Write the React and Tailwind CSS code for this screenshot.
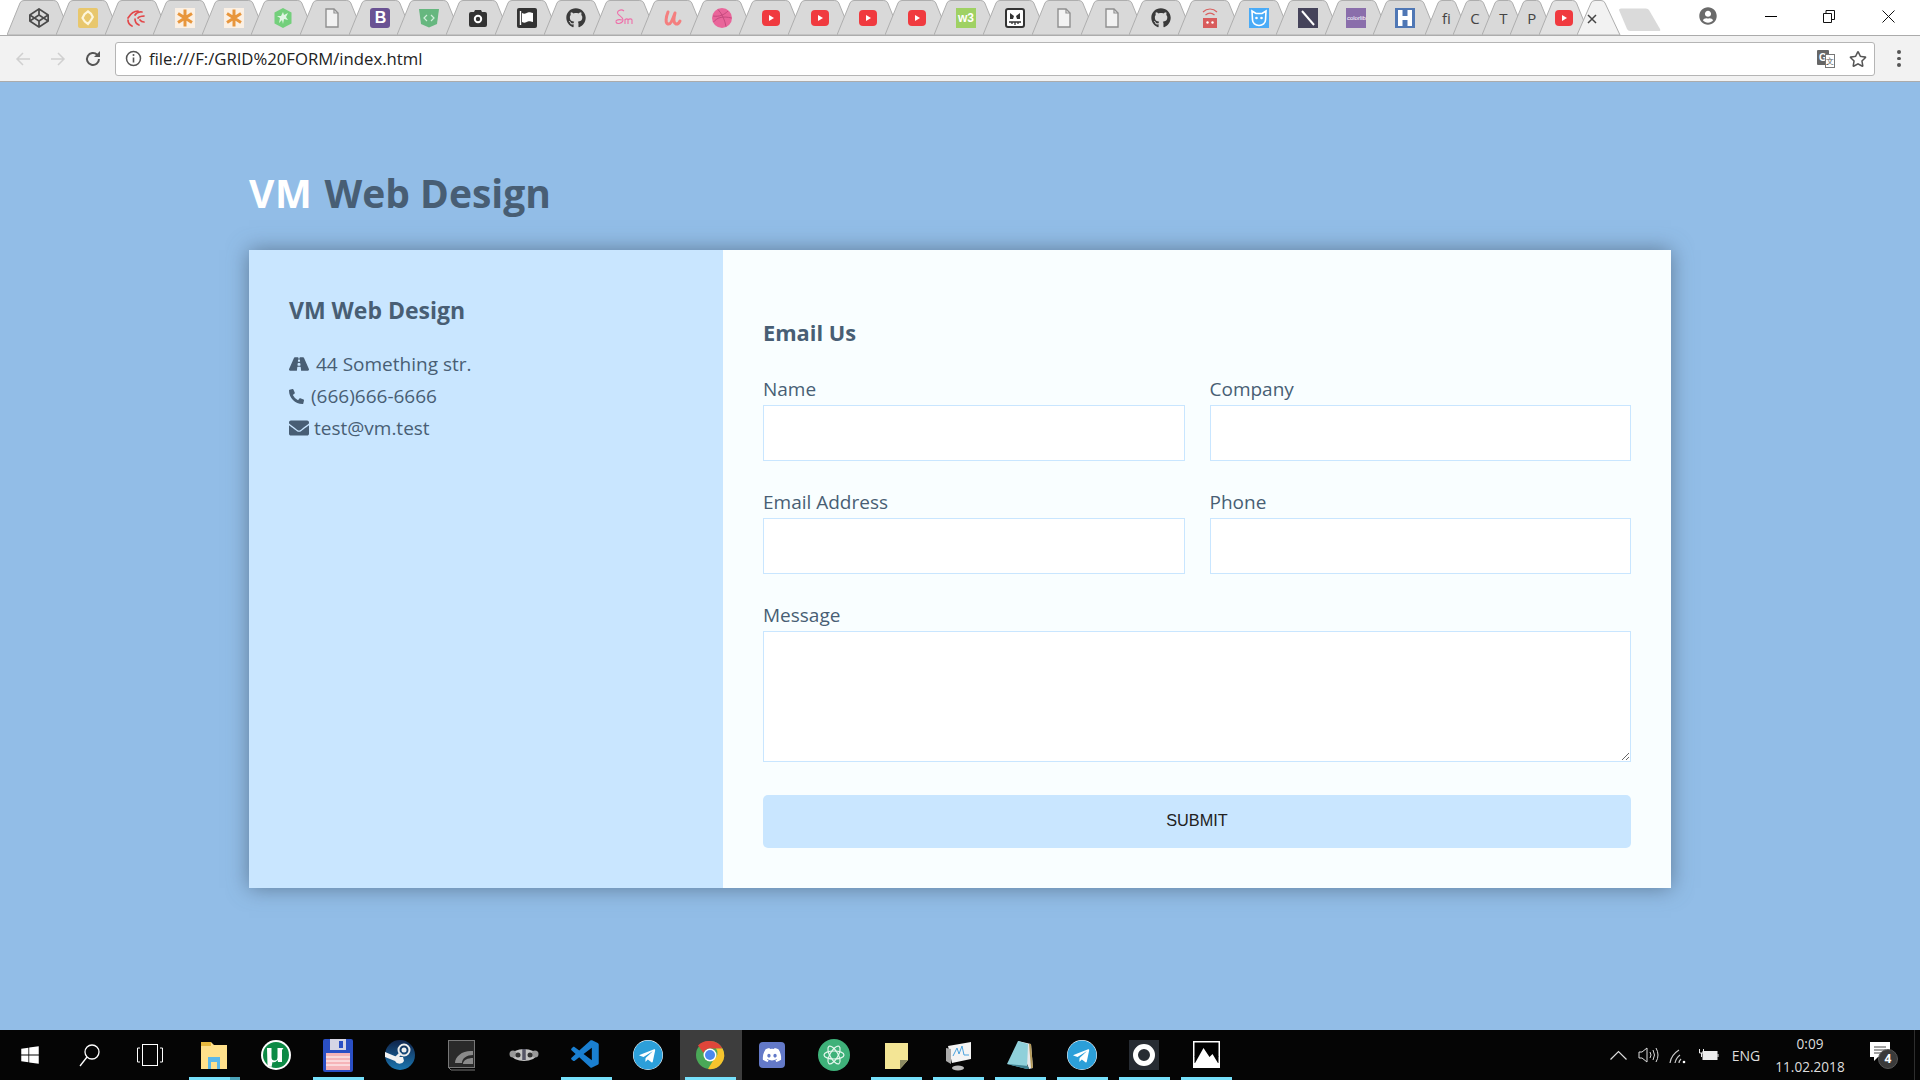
import React from "react";
import { FaCodepen, FaGithub, FaRoad, FaPhoneAlt, FaEnvelope, FaDiscord, FaTelegram, FaUserCircle, FaWindows, FaRegStar } from "react-icons/fa";
import { VscVscode } from "react-icons/vsc";

const S = ({ children, size = 20 }) => (
  <svg width={size} height={size} viewBox="0 0 20 20">{children}</svg>
);
const Asterisk = () => (
  <S><rect width="20" height="20" fill="#fbf0e4" /><g stroke="#e8963c" strokeWidth="3" strokeLinecap="butt"><path d="M10 1.500v17M3 5.500l14 9M17 5.500l-14 9" /></g></S>
);
const Yellow = () => (
  <S><rect width="20" height="20" rx="2" fill="#e8c76d" /><path d="M10 3.500l3 2.200 1.800 3.300-2 3.500-2.800 3.500-3.200-2.500L4.500 10l2-3.800z" fill="none" stroke="#fdf6dc" strokeWidth="2.200" /></S>
);
const Swirl = () => (
  <S><g fill="none" stroke="#e2484a" strokeWidth="1.700" strokeLinecap="round"><path d="M12 3C8 3 5 5 2 10M16 4c-3-.5-6 1-7 3M18 8c-3 .5-5 0-6 2M2 12c0 3 2 5 4 6M9 11c0 3 1.500 5 4 6M14 12c1 1.500 2 2 4 2" /></g></S>
);
const Green = () => (
  <S><path d="M10 0l8.500 4.500v11L10 20l-8.500-4.500v-11z" fill="#73cf7b" /><path d="M10 4l1 3 4-2-2 4 2 3-4-1-1 5-1-4-3 3 1-5-3-2 4 0z" fill="#dff5e2" /></S>
);
const File = () => (
  <S><path d="M4 1h8l4 4v14H4z" fill="#f2f2f2" stroke="#8f8f8f" strokeWidth="1.400" /><path d="M12 1v4h4" fill="none" stroke="#8f8f8f" strokeWidth="1.200" /></S>
);
const Boot = () => (
  <div className="w-5 h-5 rounded-[3px] bg-[#6a5293] text-white font-bold text-[16px] leading-5 text-center [font-family:'Liberation_Sans',sans-serif]">B</div>
);
const Shield = () => (
  <S><path d="M0 1h20l-2 15-8 3.500L2 16z" fill="#66b77f" /><path d="M8 7l-3 3 3 3M12 7l3 3-3 3" stroke="#cfeeda" strokeWidth="1.200" fill="none" /></S>
);
const Camera = () => (
  <S><path d="M1 6a2 2 0 012-2h3l1-2h6l1 2h3a2 2 0 012 2v11a2 2 0 01-2 2H3a2 2 0 01-2-2z" fill="#333" /><circle cx="10" cy="11" r="3.200" fill="none" stroke="#fff" strokeWidth="2" /></S>
);
const Flag = () => (
  <S><rect width="20" height="20" rx="2" fill="#333" /><path d="M3.500 3v14" stroke="#fff" strokeWidth="1.400" /><path d="M5 5c3 1.500 4 0 6-.5s3 .5 5 .5v9c-2 0-3-1-5-.5s-3 2-6 .5z" fill="#fff" /></S>
);
const Sm = () => (
  <S><g fill="none" stroke="#ee6fa9" strokeWidth="1.100"><path d="M10 3C7 .5 2 3 4 6c1.500 2 5 3 5 6 0 3-6 5-7 2-.5-2 3-3 6-2" /><path d="M11 16v-5M11 12c1-1.500 3-1.500 3 0v4M14 12c1-1.500 4-1.500 4 0v4" /></g></S>
);
const U = () => (
  <S><path d="M5 4C3 9 2 15 5 16s5-6 7-11M12 5c-1 4-2 10 1 11 2 .5 3-1 4-3" fill="none" stroke="#f47f7f" strokeWidth="3" strokeLinecap="round" /></S>
);
const Dribbble = () => (
  <S><circle cx="10" cy="10" r="10" fill="#e9659a" /><g fill="none" stroke="#c0477a" strokeWidth=".9"><path d="M6 1.500c4 4 7 11 8 17M1 8c6 1 11-1 15-5M1.500 14c4-5 10-6 18-4" /></g></S>
);
const Yt = () => (
  <S><rect x="1" y="2" width="18" height="16" rx="4" fill="#f03a3f" /><path d="M8 7l5 3-5 3z" fill="#fff" /></S>
);
const W3 = () => (
  <div className="w-5 h-5 bg-[#9fd163] text-white text-[12px] font-bold leading-5 text-center [font-family:'Liberation_Sans',sans-serif]">w3</div>
);
const Face = () => (
  <S><rect x="1" y="1" width="18" height="18" rx="2" fill="#fff" stroke="#333" strokeWidth="2" /><path d="M5 5l4 3-1 3H5zM15 5l-4 3 1 3h3z" fill="#333" /><path d="M4 14h12M7 14v2M10 14v3M13 14v2" stroke="#333" strokeWidth="1.300" /></S>
);
const Robot = () => (
  <S><g fill="none" stroke="#d9605f" strokeWidth="1.200"><path d="M3 4c4-4 10-4 14 0M5.500 7c3-2.500 6-2.500 9 0" /></g><rect x="3" y="10" width="14" height="10" fill="#d85c5c" /><circle cx="7.500" cy="14.500" r="1.200" fill="#fff" /><circle cx="12.500" cy="14.500" r="1.200" fill="#fff" /></S>
);
const Cat = () => (
  <S><rect width="20" height="20" fill="#4aabf7" /><path d="M3 3l4 2.500h6L17 3l-.5 9a6.500 5.500 0 01-13 0z" fill="none" stroke="#fff" strokeWidth="1.600" /><circle cx="7.500" cy="10" r="1.300" fill="#fff" /><circle cx="12.500" cy="10" r="1.300" fill="#fff" /></S>
);
const Slash = () => (
  <S><rect width="20" height="20" fill="#45435a" /><path d="M4 3l12 14" stroke="#fff" strokeWidth="2" /></S>
);
const Colorlib = () => (
  <div className="w-5 h-5 bg-[#8a6eab] text-white text-[6px] leading-5 text-center [font-family:'Liberation_Sans',sans-serif]">colorlib</div>
);
const H = () => (
  <S><rect width="20" height="20" fill="#4f77b5" /><path d="M3 2h4.500v6h5V2H17v16h-4.500v-6h-5v6H3z" fill="#fff" /></S>
);
const Txt = ({ t }) => (
  <div className="text-[15px] text-[#444] leading-5 text-center [font-family:'Open_Sans',sans-serif]">{t}</div>
);

const big = [
  <FaCodepen size={20} color="#4a4a4a" />, <Yellow />, <Swirl />, <Asterisk />, <Asterisk />, <Green />, <File />, <Boot />, <Shield />, <Camera />,
  <Flag />, <FaGithub size={20} color="#3a3a3a" />, <Sm />, <U />, <Dribbble />, <Yt />, <Yt />, <Yt />, <Yt />, <W3 />,
  <Face />, <File />, <File />, <FaGithub size={20} color="#3a3a3a" />, <Robot />, <Cat />, <Slash />, <Colorlib />, <H />,
];
const small = [<Txt t="fi" />, <Txt t="C" />, <Txt t="T" />, <Txt t="P" />];

const Tab = ({ w, icon, fill = "#d9d9d9", stroke = "#aeaeae" }) => (
  <div className="relative h-[35px] flex items-center justify-center shrink-0" style={{ width: w }}>
    <svg className="absolute top-0 left-0" width={w + 15} height="36" viewBox={`0 0 ${w + 15} 36`}>
      <path d={`M0 35 L13 3 Q14 0.5 17 0.5 L${w - 2} 0.5 Q${w + 1} 0.5 ${w + 2} 3 L${w + 15} 35 Z`} fill={fill} stroke={stroke} />
    </svg>
    <div className="relative ml-[15px] w-5 h-5 flex items-center justify-center">{icon}</div>
  </div>
);

const TabBar = () => (
  <div className="h-[35px] bg-white flex items-start pl-[7px] relative shrink-0">
    {big.map((ic, i) => <Tab key={i} w={48.8} icon={ic} />)}
    <div className="w-[2.5px] shrink-0" />
    {small.map((ic, i) => <Tab key={i} w={28.5} icon={ic} />)}
    <Tab w={35.5} fill="#e2e2e2" icon={<Yt />} />
    <div className="relative h-[35px] w-[43px] ml-[3px] shrink-0">
      <svg width="45" height="36" viewBox="0 0 45 36" className="absolute top-0 left-0">
        <path d="M0 35 L14 3 Q15 .5 18 .5 L24 .5 Q27 .5 28 3 L43 35 Z" fill="#f2f2f2" stroke="#aeaeae" />
        <path d="M11 15l8 8M19 15l-8 8" stroke="#444" strokeWidth="1.500" />
      </svg>
    </div>
    <svg width="44" height="24" viewBox="0 0 44 24" className="mt-2 ml-[-2px] shrink-0"><path d="M1 2 Q1 .5 3 .5 H28 Q30 .5 31 2 L42 21 Q43 23 41 23 H12 Q10 23 9 21 Z" fill="#dadada" /></svg>
    <div className="flex-1" />
    <div className="flex items-center h-[32px] pr-[25px]">
      <FaUserCircle size={18} color="#6a6a6a" className="mr-[48px]" />
      <div className="w-[12px] h-px bg-black mr-[46px]" />
      <svg width="12" height="13" viewBox="0 0 12 13" className="mr-[47px]"><path d="M.5 3.500h8v9h-8zM3 3.500v-3h8.500v9H8.500" fill="none" stroke="#111" /></svg>
      <svg width="13" height="13" viewBox="0 0 13 13"><path d="M.5.500l12 12M12.500.500l-12 12" stroke="#111" /></svg>
    </div>
  </div>
);

const Toolbar = () => (
  <div className="h-[47px] bg-[#f2f2f2] border-t border-b border-[#ababab] flex items-center shrink-0 pl-[15px]">
    <svg width="16" height="16" viewBox="0 0 16 16"><path d="M15 8H2M8 2L2 8l6 6" fill="none" stroke="#d0d0d0" strokeWidth="1.500" /></svg>
    <svg width="16" height="16" viewBox="0 0 16 16" className="ml-[19px]"><path d="M1 8h13M8 2l6 6-6 6" fill="none" stroke="#d0d0d0" strokeWidth="1.500" /></svg>
    <svg width="18" height="18" viewBox="0 0 18 18" className="ml-[18px]"><path d="M15 9a6 6 0 11-1.800-4.300" fill="none" stroke="#555" strokeWidth="2" /><path d="M16 1v6h-6z" fill="#555" /></svg>
    <div className="ml-[13px] w-[1760px] h-[34px] bg-white border border-[#b5b5b5] rounded-[3px] flex items-center pl-[9px] pr-[7px] shrink-0">
      <svg width="17" height="17" viewBox="0 0 17 17"><circle cx="8.500" cy="8.500" r="7" fill="none" stroke="#555" strokeWidth="1.500" /><path d="M8.500 7.500v5" stroke="#555" strokeWidth="1.600" /><circle cx="8.500" cy="5" r="1" fill="#555" /></svg>
      <span className="ml-[7px] text-[16.7px] text-[#222] [font-family:'Open_Sans',sans-serif]">file:///F:/GRID%20FORM/index.html</span>
      <div className="flex-1" />
      <div className="relative w-[18px] h-[18px] mr-[14px]">
        <div className="absolute left-0 top-0 w-3 h-[15px] bg-[#666] rounded-[1px] text-white text-[10px] font-bold leading-[15px] text-center [font-family:'Liberation_Sans',sans-serif]">G</div>
        <div className="absolute right-0 bottom-0 w-[10px] h-[14px] bg-white border border-[#777] text-[#555] text-[8px] leading-[13px] text-center [font-family:'Liberation_Sans',sans-serif]">文</div>
      </div>
      <FaRegStar size={18} color="#555" />
    </div>
    <div className="ml-[22px] flex flex-col gap-[3px]">
      <div className="w-[3.5px] h-[3.5px] rounded-full bg-[#555]" />
      <div className="w-[3.5px] h-[3.5px] rounded-full bg-[#555]" />
      <div className="w-[3.5px] h-[3.5px] rounded-full bg-[#555]" />
    </div>
  </div>
);

const Field = ({ label, wide, area }) => (
  <div className={wide ? "col-span-2" : ""}>
    <label className="block text-[19px] leading-[31px] text-[#485e74]">{label}</label>
    {area ? (
      <textarea className="block w-full h-[131px] bg-white border border-[#c9e6ff]" />
    ) : (
      <input className="block w-full h-[56px] bg-white border border-[#c9e6ff]" />
    )}
  </div>
);

const Page = () => (
  <main className="flex-1 bg-[#92bde7] text-[#485e74] [font-family:'Open_Sans',sans-serif]">
    <div className="w-[1422px] mx-auto pt-[85px]">
      <h1 className="text-[39px] leading-[52px] font-bold h-[83px]"><span className="text-white tracking-[0.6px]">VM</span> <span className="ml-[2px]">Web Design</span></h1>
      <div className="grid grid-cols-[1fr_2fr] shadow-[0_0_20px_0_rgba(72,94,116,0.7)]">
        <div className="bg-[#c9e6ff] p-10">
          <h3 className="text-[23px] leading-[28px] font-bold mt-[6px]">VM Web Design</h3>
          <ul className="mt-[24px] text-[19px] leading-[32px]">
            <li className="flex items-center"><FaRoad size={20} className="mr-[7px]" />44 Something str.</li>
            <li className="flex items-center"><FaPhoneAlt size={15} className="mr-[7px]" />(666)666-6666</li>
            <li className="flex items-center"><FaEnvelope size={20} className="mr-[5px]" />test@vm.test</li>
          </ul>
        </div>
        <div className="bg-[#f9feff] p-10">
          <h3 className="text-[21.8px] leading-[28px] font-bold mt-[29px] mb-[27px]">Email Us</h3>
          <div className="grid grid-cols-2 gap-x-[25px] gap-y-[26px]">
            <Field label="Name" />
            <Field label="Company" />
            <Field label="Email Address" />
            <Field label="Phone" />
            <Field label="Message" wide area />
            <div className="col-span-2 mt-[7px]">
              <button className="w-full h-[53px] bg-[#c9e6ff] rounded-[5px] text-[16.3px] text-[#222] pb-[3px] [font-family:'Liberation_Sans',sans-serif]">SUBMIT</button>
            </div>
          </div>
        </div>
      </div>
    </div>
  </main>
);

const T = ({ w = 34, children }) => <svg width={w} height="36" viewBox={`0 0 ${w} 36`}>{children}</svg>;

const task = [
  { u: 1, stack: 1, el: <T><path d="M4 5h10l3 3h13v24H4z" fill="#ffe08a" /><path d="M4 5h10v4H4z" fill="#e8b93e" /><path d="M11 20h12v12h-3v-7h-6v7h-3z" fill="#5cb8e8" /></T> },
  { el: <T><circle cx="17" cy="18" r="15" fill="#fff" /><circle cx="17" cy="18" r="13" fill="#0d8a45" /><path d="M8 11h4.500v9q0 3.500 3 3.500t3-3.500v-9h6l-1.500 2v12h-4l-.5-2q-2 3-5 2l-1 5-4-1z" fill="#fff" /></T> },
  { u: 1, el: <T><rect x="2" y="2" width="30" height="33" rx="2" fill="#2a4fc4" /><rect x="9" y="2" width="16" height="11" fill="#d5d5e5" /><rect x="18" y="4" width="4" height="7" fill="#2a4fc4" /><rect x="5" y="16" width="24" height="17" fill="#f6b4b8" /><path d="M5 20h24M5 24h24M5 28h24" stroke="#fff" /></T> },
  { el: (
    <T>
      <defs><linearGradient id="steamg" x1="0" y1="0" x2="0" y2="1"><stop offset="0" stopColor="#10234a" /><stop offset="1" stopColor="#1b76b0" /></linearGradient></defs>
      <circle cx="17" cy="18" r="15" fill="url(#steamg)" />
      <path d="M2 20l10 4a5 5 0 009 0l-1-4-6 0-12-5z" fill="#f2f2f2" />
      <circle cx="21" cy="13" r="5.500" fill="none" stroke="#eee" strokeWidth="2" />
      <circle cx="21" cy="13" r="2.500" fill="#eee" />
      <path d="M13 21l5-5" stroke="#eee" strokeWidth="3" />
    </T>
  ) },
  { el: <T><rect x="3.500" y="3.500" width="26" height="27" fill="#2a2a2a" stroke="#777" /><path d="M3 30l3 3h24" fill="none" stroke="#777" /><path d="M10 26c0-7 8-13 18-12v4c-6 0-11 3-11 8zM18 27c0-4 5-6 10-6v6z" fill="#8a8a8a" /></T> },
  { el: <T><ellipse cx="17" cy="18" rx="12" ry="6" fill="#c4c4c4" /><circle cx="6" cy="17" r="3.500" fill="#999" /><circle cx="28" cy="17" r="3.500" fill="#999" /><circle cx="11" cy="18" r="2.500" fill="#333" /><circle cx="23" cy="18" r="2.500" fill="#333" /><path d="M17 12v11" stroke="#556" strokeWidth="3.500" /></T> },
  { u: 1, el: <VscVscode size={34} color="#1a7fd1" /> },
  { el: <FaTelegram size={30} color="#2c9fd9" style={{ background: "#fff", borderRadius: 15 }} /> },
  { u: 1, on: 1, el: <T><circle cx="17" cy="18" r="14" fill="#4aa857" /><path d="M17 4a14 14 0 0112.500 7.500H17a7 7 0 00-6.500 4.500L5 8.500A14 14 0 0117 4z" fill="#e0463a" /><path d="M29.500 11.500A14 14 0 0115 32l6-10a7 7 0 002-10.500z" fill="#f6c42d" /><circle cx="17" cy="18" r="6.500" fill="#fff" /><circle cx="17" cy="18" r="5" fill="#4a88ee" /></T> },
  { el: <FaDiscord size={26} color="#fff" style={{ background: "#6379c8", borderRadius: 4, padding: 3 }} /> },
  { el: <T><circle cx="17" cy="18" r="16" fill="#3eb179" /><g fill="none" stroke="#e6f7ee" strokeWidth="1.200"><ellipse cx="17" cy="18" rx="10" ry="4" transform="rotate(60 17 18)" /><ellipse cx="17" cy="18" rx="10" ry="4" transform="rotate(-60 17 18)" /><ellipse cx="17" cy="18" rx="10" ry="4" /></g></T> },
  { u: 1, el: <T><path d="M6 6h23v17l-8 9H6z" fill="#f3e595" /><path d="M29 23l-8 9v-9z" fill="#8c8a62" /></T> },
  { u: 1, el: <T><path d="M7 9l23-4v17l-19 4z" fill="#f4f4f4" /><path d="M12 19l4-8 2 6 3-8 2 9h5" stroke="#4aa3df" fill="none" /><path d="M5 11v13l5 3V12z" fill="#aaa" /><ellipse cx="17" cy="31" rx="6" ry="2.500" fill="#bbb" /></T> },
  { u: 1, el: <T><path d="M15 4l13 3 2 24-4 1z" fill="#e8e8e8" /><path d="M15 4l10 3-1 25L4 27z" fill="#8fd0da" /><path d="M4 27l20 5 2 0-1-3z" fill="#3d7f90" /><path d="M27 7l2 24" stroke="#b49a5a" strokeWidth="2" /></T> },
  { u: 1, el: <FaTelegram size={30} color="#2c9fd9" style={{ background: "#fff", borderRadius: 15 }} /> },
  { u: 1, el: <div className="w-[30px] h-[30px] bg-[#272c33] flex items-center justify-center"><div className="w-[22px] h-[22px] rounded-full border-[5px] border-white" /></div> },
  { u: 1, el: <T><rect x="4" y="4" width="27" height="27" fill="#fff" /><rect x="5.500" y="5.500" width="24" height="14" fill="#000" /><rect x="5.500" y="19" width="24" height="7" fill="#000" /><path d="M5.500 27l9-16 6 9 3-3 6 10v4h-24z" fill="#fff" /></T> },
];

const Taskbar = () => (
  <footer className="h-[50px] bg-[#050505] flex items-stretch text-white shrink-0">
    <div className="w-[60px] flex items-center justify-center"><FaWindows size={20} /></div>
    <div className="w-[60px] flex items-center justify-center">
      <svg width="22" height="24" viewBox="0 0 22 24"><circle cx="13" cy="9" r="7" fill="none" stroke="#fff" strokeWidth="1.300" /><path d="M8 14L1 23" stroke="#fff" strokeWidth="1.300" /></svg>
    </div>
    <div className="w-[60px] flex items-center justify-center">
      <svg width="26" height="22" viewBox="0 0 26 22"><rect x="5.500" y=".5" width="15" height="21" fill="none" stroke="#fff" /><path d="M3 4H.5v14H3M23 4h2.500v14H23" fill="none" stroke="#fff" /></svg>
    </div>
    <div className="w-[3.5px]" />
    {task.map((t, i) => (
      <div key={i} className={`relative w-[62px] flex items-center justify-center pr-[2px] ${t.on ? "bg-[#3d3d3d]" : ""}`}>
        {t.el}
        {t.u ? <div className="absolute bottom-0 left-[5.5px] w-[51px] h-[3px] bg-[#76e0fb]" /> : null}
        {t.stack ? <div className="absolute bottom-0 left-[46px] w-[10.5px] h-[3px] bg-[#4ba3b8]" /> : null}
      </div>
    ))}
    <div className="flex-1" />
    <div className="flex items-center text-[#ddd] [font-family:'Open_Sans',sans-serif]">
      <svg width="17" height="10" viewBox="0 0 17 10" className="mr-[11px]"><path d="M.5 9.500l8-8 8 8" fill="none" stroke="#ddd" strokeWidth="1.200" /></svg>
      <svg width="21" height="18" viewBox="0 0 21 18" className="mr-[10.5px]"><path d="M1 6h3l5-4v14l-5-4H1z" fill="none" stroke="#ddd" /><path d="M12 6q2 3 0 6M15 4q3 5 0 10M18 2q4 7 0 14" fill="none" stroke="#ddd" /></svg>
      <svg width="18" height="17" viewBox="0 0 18 17" className="mr-[10.5px]"><path d="M1 16q1-8 9-13M6 16q1-5 5-8M10 16q0-2 2-4" fill="none" stroke="#ccc" strokeWidth="1.200" /><circle cx="15" cy="15" r="1.300" fill="#fff" /></svg>
      <svg width="21" height="14" viewBox="0 0 21 14" className="mr-[11.5px]"><rect x="5" y="3.500" width="14" height="8" fill="#eee" stroke="#eee" /><path d="M20 6v3" stroke="#eee" /><path d="M1.500 1v4h4V1M3.500 5v4" stroke="#eee" fill="none" /></svg>
      <div className="text-[14px] w-[32px] text-center">ENG</div>
      <div className="w-[100px] ml-[-2px] text-center text-[13.6px] leading-[23px]">
        <div>0:09</div>
        <div>11.02.2018</div>
      </div>
      <div className="relative w-[30px] h-[30px] ml-[8px] mr-[16px]">
        <svg width="22" height="22" viewBox="0 0 22 22" className="absolute left-[1px] top-0"><path d="M1 2h20v15H9l-4 4v-4H1z" fill="#fff" /><path d="M5 7h12M5 10h12M5 13h12" stroke="#444" /></svg>
        <div className="absolute left-[10px] top-[9px] w-5 h-5 rounded-full bg-[#3a3a3a] border border-[#555] text-white text-[12px] font-bold leading-[18px] text-center">4</div>
      </div>
      <div className="w-px h-full bg-[#2e2e2e] mr-[5px]" />
    </div>
  </footer>
);

export default function App() {
  return (
    <div className="w-[1920px] h-[1080px] overflow-hidden flex flex-col">
      <TabBar />
      <Toolbar />
      <Page />
      <Taskbar />
    </div>
  );
}
